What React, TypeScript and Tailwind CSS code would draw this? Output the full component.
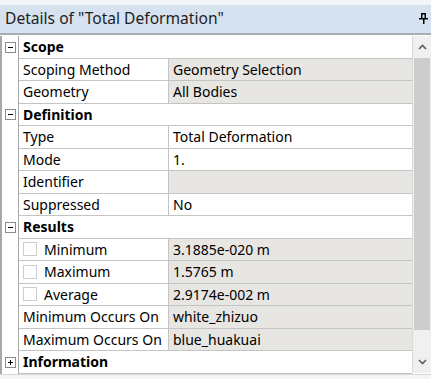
import React from "react";

type Row =
  | { kind: "header"; label: string; open: boolean }
  | { kind: "prop"; label: string; value: string; gray: boolean; check?: boolean };

const rows: Row[] = [
  { kind: "header", label: "Scope", open: true },
  { kind: "prop", label: "Scoping Method", value: "Geometry Selection", gray: true },
  { kind: "prop", label: "Geometry", value: "All Bodies", gray: true },
  { kind: "header", label: "Definition", open: true },
  { kind: "prop", label: "Type", value: "Total Deformation", gray: false },
  { kind: "prop", label: "Mode", value: "1.", gray: false },
  { kind: "prop", label: "Identifier", value: "", gray: true },
  { kind: "prop", label: "Suppressed", value: "No", gray: false },
  { kind: "header", label: "Results", open: true },
  { kind: "prop", label: "Minimum", value: "3.1885e-020 m", gray: true, check: true },
  { kind: "prop", label: "Maximum", value: "1.5765 m", gray: true, check: true },
  { kind: "prop", label: "Average", value: "2.9174e-002 m", gray: true, check: true },
  { kind: "prop", label: "Minimum Occurs On", value: "white_zhizuo", gray: true },
  { kind: "prop", label: "Maximum Occurs On", value: "blue_huakuai", gray: true },
  { kind: "header", label: "Information", open: false },
];

function Expander({ open }: { open: boolean }) {
  return (
    <div className="w-[11px] h-[11px] border border-[#8c8c8c] bg-white flex items-center justify-center">
      <svg width="9" height="9" viewBox="0 0 9 9">
        <rect x="2" y="4" width="5" height="1" fill="#000" />
        {!open && <rect x="4" y="2" width="1" height="5" fill="#000" />}
      </svg>
    </div>
  );
}

export default function App() {
  return (
    <div
      className="w-[431px] h-[379px] bg-white overflow-hidden text-black"
      style={{ fontFamily: '"Noto Sans", "Open Sans", sans-serif' }}
    >
      <div className="h-[5px] bg-[#f3f5f8]" />
      <div className="h-[28px] bg-[#d6e2ef] flex items-center justify-between pl-[5px] pr-[3px]">
        <span className="text-[15.6px] leading-none text-[#1e1e1e]">Details of "Total Deformation"</span>
        <svg width="9" height="12" viewBox="0 0 9 12">
          <rect x="0" y="5" width="9" height="1.5" fill="#000" />
          <rect x="2" y="0" width="1.5" height="6" fill="#000" />
          <rect x="5.5" y="0" width="1.5" height="6" fill="#000" />
          <rect x="2" y="0" width="5" height="1.5" fill="#000" />
          <rect x="4" y="6" width="1.5" height="5" fill="#000" />
        </svg>
      </div>
      <div className="h-[2px] bg-[#a6adb6]" />
      <div className="h-[1px] bg-white" />
      <div className="flex">
        <div className="w-[412px] border-l-2 border-[#a8a8a8]">
          {rows.map((r, i) => (
            <div key={i} className="flex h-[22.5px]">
              <div className="w-[17px] flex items-center justify-center border-r border-[#a8a8a8] bg-white">
                {r.kind === "header" && <Expander open={r.open} />}
              </div>
              {r.kind === "header" ? (
                <div className="flex-1 flex items-center pl-[4px] border-b-[1.5px] border-[#c4c4c4] bg-white text-[14px] font-bold">
                  {r.label}
                </div>
              ) : (
                <>
                  <div className="w-[150px] flex items-center pl-[4px] border-b-[1.5px] border-r-[1.5px] border-[#c4c4c4] bg-white text-[14px] whitespace-nowrap">
                    {r.check && (
                      <span className="w-[14px] h-[14px] border border-[#cccccc] bg-white mr-[7px] shrink-0" />
                    )}
                    {r.label}
                  </div>
                  <div
                    className={`flex-1 flex items-center pl-[4px] border-b-[1.5px] border-[#c4c4c4] text-[14px] whitespace-nowrap ${
                      r.gray ? "bg-[#e7e6e3]" : "bg-white"
                    }`}
                  >
                    {r.value}
                  </div>
                </>
              )}
            </div>
          ))}
        </div>
        <div className="w-[19px] bg-[#f0f0f0] border-l border-[#d8d8d8] flex flex-col h-[337px]">
          <div className="h-[22px] flex items-center justify-center">
            <svg width="9" height="6" viewBox="0 0 9 6">
              <path d="M1 5 L4.5 1.5 L8 5" stroke="#606060" strokeWidth="1.6" fill="none" />
            </svg>
          </div>
          <div className="h-[272px] mx-[1px] bg-[#cdcdcd]" />
          <div className="flex-1" />
          <div className="h-[22px] flex items-center justify-center">
            <svg width="9" height="6" viewBox="0 0 9 6">
              <path d="M1 1 L4.5 4.5 L8 1" stroke="#606060" strokeWidth="1.6" fill="none" />
            </svg>
          </div>
        </div>
      </div>
      <div className="h-[1px] bg-[#d8d8d8]" />
      <div className="h-[6px] bg-[#f4f4f4]" />
    </div>
  );
}
